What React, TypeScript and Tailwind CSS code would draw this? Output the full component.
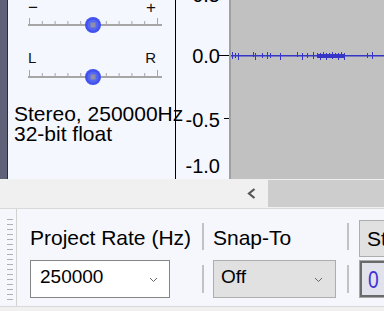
import React from "react";

const TICKS = [0, 1, 2, 3, 4, 5, 6, 7, 8, 9, 10];

const Slider = ({ left, right, size, gap }: { left: string; right: string; size: string; gap: string }) => (
  <div className="pl-[20px]">
    <div className={`flex justify-between w-[128px] h-[16px] leading-[16px] ${size} text-[#111]`}>
      <span>{left}</span>
      <span>{right}</span>
    </div>
    <svg width="136" height="20" className={`block ${gap}`}>
      <rect x="0" y="8" width="134" height="2" fill="#a6a6a6" />
      {TICKS.map((i) => {
        const x = 1 + i * 12.8;
        const end = i === 0 || i === 10;
        return <rect key={i} x={x} y={end ? 2 : 5} width="1" height={end ? 7 : 4} fill="#a6a6a6" />;
      })}
      <circle cx="65" cy="9" r="8" fill="#4152ee" />
      <circle cx="65" cy="9" r="5.5" fill="#5566f2" />
      <rect x="62.5" y="6.5" width="5" height="5" fill="#8f8fa8" />
    </svg>
  </div>
);

const Chevron = () => (
  <svg width="9" height="6" className="block">
    <path d="M1 1 L4.5 4.5 L8 1" fill="none" stroke="#666" strokeWidth="1" />
  </svg>
);

const SPIKES = [232, 235, 238, 253, 255, 262, 267, 270, 280, 297, 302, 307, 313, 317, 320, 323, 326, 329, 332, 335, 338, 341, 344, 367, 372];

export default function App() {
  return (
    <div className="w-[384px] h-[311px] overflow-hidden bg-[#f0f0f0] text-black font-['Liberation_Sans',Arial,sans-serif]">
      {/* track */}
      <div className="flex h-[179px]">
        <div className="w-[8px] bg-[#5f6179] border-r border-[#2b2b3b]" />
        <div className="w-[168px] bg-[#f5f7fe] border-r border-black">
          <Slider left="−" right="+" size="text-[17px]" gap="mt-0" />
          <div className="mt-[14px]">
            <Slider left="L" right="R" size="text-[15px]" gap="mt-[2px]" />
          </div>
          <div className="relative z-10 mt-[16px] pl-[6px] text-[21px] leading-[20px] whitespace-nowrap">
            <div>Stereo, 250000Hz</div>
            <div>32-bit float</div>
          </div>
        </div>
        <div className="relative w-[55px] bg-[#f5f7fe] border-r-2 border-[#a0a0a0] text-[20px] leading-[20px]">
          <div className="absolute right-[9px] top-[-15px]">0.5</div>
          <div className="absolute right-[9px] top-[46px]">0.0</div>
          <div className="absolute right-[9px] top-[110px]">-0.5</div>
          <div className="absolute right-[9px] top-[156px]">-1.0</div>
          <div className="absolute right-0 top-[55px] w-[10px] h-px bg-black" />
          <div className="absolute right-0 top-[118px] w-[5px] h-px bg-black" />
        </div>
        <div className="flex-1 bg-[#c1c1c1]">
          <svg width="153" height="179" className="block">
            <rect x="0" y="55" width="153" height="1.5" fill="#3535c8" />
            <rect x={318 - 231} y="54" width="27" height="4" fill="#3535c8" />
            {SPIKES.map((x, i) => (
              <rect key={i} x={x - 231} y={i % 3 === 0 ? 52 : 53} width="1" height={i % 2 ? 5 : 7} fill="#3535c8" />
            ))}
          </svg>
        </div>
      </div>

      {/* horizontal scrollbar */}
      <div className="flex h-[29px]">
        <div className="w-[268px] flex items-center justify-end pr-[12px]">
          <svg width="9" height="11" className="block">
            <path d="M7.5 1 L2 5.5 L7.5 10" fill="none" stroke="#555" strokeWidth="2.2" />
          </svg>
        </div>
        <div className="flex-1 my-px bg-[#cdcdcd]" />
      </div>

      {/* selection toolbar */}
      <div className="flex h-[99px] bg-[#f6f7fc] border-y border-[#d9d9d9] text-[21px] leading-[24px]">
        <div className="w-[17px] border-r border-[#d2d2d2] flex flex-col gap-[4px] pt-[10px] pl-[7px]">
          {Array.from({ length: 17 }).map((_, i) => (
            <div key={i} className="w-[6px] h-px bg-[#b0b0b0]" />
          ))}
        </div>

        <div className="ml-[13px] w-[172px]">
          <div className="mt-[17px] whitespace-nowrap">Project Rate (Hz)</div>
          <div className="mt-[10px] w-[140px] h-[38px] bg-white border border-[#858585] flex items-start justify-between pt-[4px] pl-[9px] pr-[11px] text-[19px]">
            <span>250000</span>
            <div className="mt-[12px]"><Chevron /></div>
          </div>
        </div>

        <div className="w-[2px]">
          <div className="mt-[14px] h-[27px] bg-[#c2c2c2]" />
          <div className="mt-[15px] h-[28px] bg-[#c2c2c2]" />
        </div>

        <div className="ml-[9px] w-[123px]">
          <div className="mt-[17px] whitespace-nowrap">Snap-To</div>
          <div className="mt-[10px] w-[123px] h-[38px] bg-[#e1e1e1] border border-[#adadad] flex items-start justify-between pt-[4px] pl-[7px] pr-[12px] text-[19px]">
            <span>Off</span>
            <div className="mt-[12px]"><Chevron /></div>
          </div>
        </div>

        <div className="ml-[11px] w-[2px]">
          <div className="mt-[14px] h-[27px] bg-[#c2c2c2]" />
          <div className="mt-[15px] h-[28px] bg-[#c2c2c2]" />
        </div>

        <div className="ml-[10px] flex-1 min-w-0">
          <div className="mt-[11px] h-[37px] w-[200px] bg-[#e1e1e1] border border-[#adadad] flex items-center pl-[7px] whitespace-nowrap">
            Start and End of Selection
          </div>
          <div className="mt-[3px] h-[38px] w-[200px] border border-[#a8a8a8]">
            <div className="h-full border-2 border-[#6a6a6a] bg-[#e2e2ec] pl-[6px] pt-[4px]">
              <span className="inline-block origin-left scale-x-[0.8] text-[24px] leading-[26px] text-[#4032d8]">0</span>
            </div>
          </div>
        </div>
      </div>
    </div>
  );
}
